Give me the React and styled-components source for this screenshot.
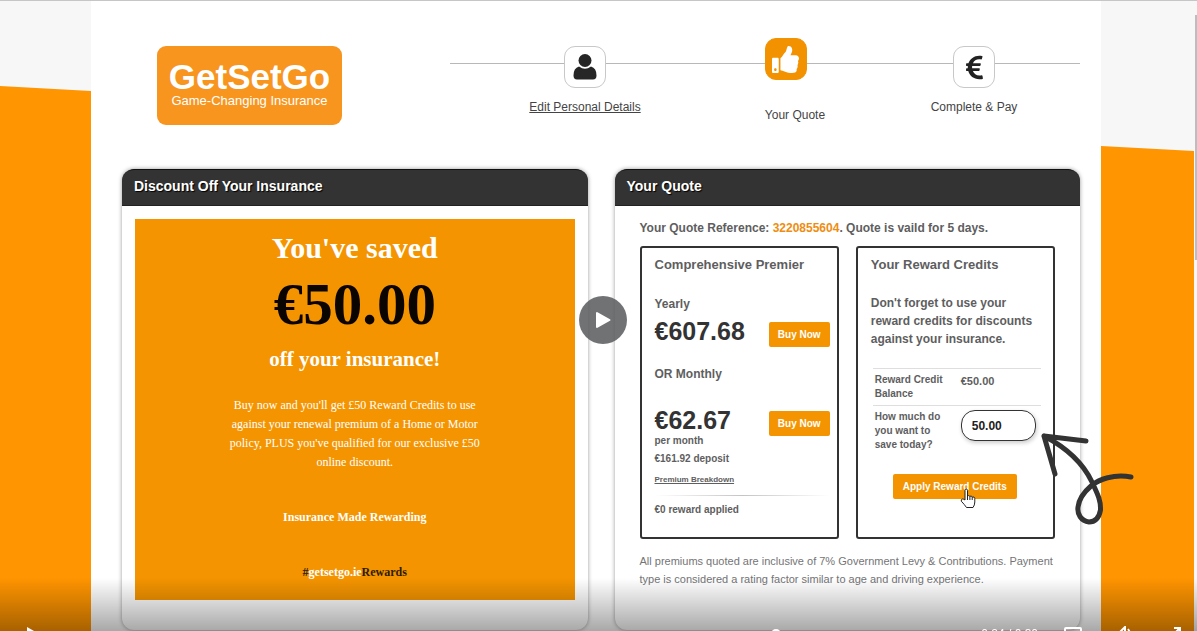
import React from "react";
import styled, { createGlobalStyle } from "styled-components";
import { FaThumbsUp, FaEuroSign } from "react-icons/fa";

function App() {
  return (
    <>
      <GlobalStyle />
      <Page>
        <Side $top="85px">
          <SideColor />
        </Side>
        <Main>
          <Header>
            <Logo href="#home">
              <LogoName>GetSetGo</LogoName>
              <LogoTag>Game-Changing Insurance</LogoTag>
            </Logo>
            <Steps>
              <Step>
                <StepBox>
                  <UserIcon />
                </StepBox>
                <StepLink href="#details">Edit Personal Details</StepLink>
              </Step>
              <Step $active>
                <StepBox $active>
                  <FaThumbsUp size={27} color="#fff" />
                </StepBox>
                <span>Your Quote</span>
              </Step>
              <Step>
                <StepBox>
                  <FaEuroSign size={27} color="#222" />
                </StepBox>
                <span>Complete &amp; Pay</span>
              </Step>
            </Steps>
          </Header>

          <Panels>
            <Panel>
              <PanelTitle>Discount Off Your Insurance</PanelTitle>
              <DiscountBody>
                <Promo>
                  <PromoLead>You've saved</PromoLead>
                  <PromoAmount>€50.00</PromoAmount>
                  <PromoSub>off your insurance!</PromoSub>
                  <PromoText>
                    Buy now and you'll get £50 Reward Credits to use against your
                    renewal premium of a Home or Motor policy, PLUS you've
                    qualified for our exclusive £50 online discount.
                  </PromoText>
                  <PromoLine>Insurance Made Rewarding</PromoLine>
                  <PromoLine $dark>
                    #<em>getsetgo.ie</em>Rewards
                  </PromoLine>
                </Promo>
              </DiscountBody>
            </Panel>

            <Panel>
              <PanelTitle>Your Quote</PanelTitle>
              <QuoteBody>
                <Reference>
                  Your Quote Reference: <b>3220855604</b>. Quote is vaild for 5 days.
                </Reference>
                <Cards>
                  <Card>
                    <CardTitle>Comprehensive Premier</CardTitle>
                    <Period $gap="21px">Yearly</Period>
                    <Plan $gap="4px">
                      <Price>€607.68</Price>
                      <BuyButton type="button">Buy Now</BuyButton>
                    </Plan>
                    <Period $gap="18px">OR Monthly</Period>
                    <Plan $gap="23px">
                      <div>
                        <Price>€62.67</Price>
                        <Small>per month</Small>
                      </div>
                      <BuyButton type="button">Buy Now</BuyButton>
                    </Plan>
                    <Small $gap="4px">€161.92 deposit</Small>
                    <Breakdown href="#breakdown">Premium Breakdown</Breakdown>
                    <Divider />
                    <Small $gap="7px">€0 reward applied</Small>
                  </Card>

                  <Card>
                    <CardTitle>Your Reward Credits</CardTitle>
                    <CardText>
                      Don't forget to use your reward credits for discounts
                      against your insurance.
                    </CardText>
                    <Credits>
                      <tbody>
                        <tr>
                          <th scope="row">Reward Credit Balance</th>
                          <td>€50.00</td>
                        </tr>
                        <tr>
                          <th scope="row">
                            <label htmlFor="amount">
                              How much do you want to save today?
                            </label>
                          </th>
                          <td>
                            <Amount id="amount" type="text" defaultValue="50.00" autoFocus />
                          </td>
                        </tr>
                      </tbody>
                    </Credits>
                    <ApplyButton type="button">
                      Apply Reward Credits
                      <HandCursor />
                    </ApplyButton>
                    <Arrow />
                  </Card>
                </Cards>
                <Footnote>
                  All premiums quoted are inclusive of 7% Government Levy &amp;
                  Contributions. Payment type is considered a rating factor
                  similar to age and driving experience.
                </Footnote>
              </QuoteBody>
            </Panel>
          </Panels>
        </Main>
        <Side $top="145px">
          <SideColor />
        </Side>
        <ScrollTrack>
          <ScrollThumb />
        </ScrollTrack>

        <Player>
          <PlayButton type="button" aria-label="Play video">
            <svg width="16" height="18" viewBox="0 0 16 18">
              <path d="M2 2v14l12.500-7z" fill="#fff" stroke="#fff" strokeWidth="2" strokeLinejoin="round" />
            </svg>
          </PlayButton>
          <Controls>
            <ControlButton type="button" aria-label="Play">
              <svg width="16" height="18" viewBox="0 0 16 18">
                <path d="M1 1v16l14-8z" fill="#fff" />
              </svg>
            </ControlButton>
            <Track>
              <Progress style={{ width: `${(24 / 30) * 100}%` }}>
                <Knob />
              </Progress>
            </Track>
            <Time>0:24 / 0:30</Time>
            <ControlButton type="button" aria-label="Captions">
              <svg width="18" height="16" viewBox="0 0 18 16">
                <rect x="1" y="2" width="16" height="13" rx="1" fill="none" stroke="#fff" strokeWidth="2" />
              </svg>
            </ControlButton>
            <ControlButton type="button" aria-label="Volume">
              <svg width="18" height="18" viewBox="0 0 18 18">
                <path d="M1 6h4l5-5v16l-5-5H1zM13 3q4 5 0 11" fill="none" stroke="#fff" strokeWidth="2" />
              </svg>
            </ControlButton>
            <ControlButton type="button" aria-label="Fullscreen">
              <svg width="16" height="16" viewBox="0 0 16 16">
                <path d="M8 2h6v6M14 2L2 14M2 8v6h6" fill="none" stroke="#fff" strokeWidth="2" />
              </svg>
            </ControlButton>
          </Controls>
        </Player>
      </Page>
    </>
  );
}

function UserIcon() {
  return (
    <svg width="26" height="28" viewBox="0 0 26 28" fill="#262626">
      <circle cx="13" cy="7.500" r="6.500" />
      <path d="M7 13.500Q13 18 19 13.500Q24.500 15 24.500 22.500Q24.500 26.500 21 26.500H5Q1.500 26.500 1.500 22.500Q1.500 15 7 13.500z" />
    </svg>
  );
}

function HandCursor() {
  return (
    <Hand width="16" height="21" viewBox="0 0 16 21">
      <path
        d="M5 12V2.500Q5 1 6.200 1T7.500 2.500V8Q8.700 6.900 9.900 8.400Q11.200 7.300 12.200 9Q14.500 8.300 14.800 10.500V14Q14.800 17 13 19.500H6.500Q4.500 16.500 1.300 13.200Q.8 11.200 2.600 11Q4 11 5 12z"
        fill="#fff"
        stroke="#222"
      />
      <path d="M7.500 8v4M9.900 8.500V12M12.200 9v3" stroke="#222" fill="none" />
    </Hand>
  );
}

function Arrow() {
  return (
    <ArrowSvg width="96" height="96" viewBox="0 0 96 96">
      <path
        d="M47 11L5 6L16 44M5 6C28 18 44 33 53 52C58 63 62 70 61.500 80C60 88 56 92 50 92C42 91 38 84 39 77C40 69 45 62 52 56C60 49 75 44 92 47"
        fill="none"
        stroke="#333"
        strokeWidth="5"
        strokeLinecap="round"
        strokeLinejoin="round"
      />
    </ArrowSvg>
  );
}

const GlobalStyle = createGlobalStyle`
  * {
    box-sizing: border-box;
  }
  body {
    margin: 0;
    font-family: "Liberation Sans", Arial, sans-serif;
    font-size: 12px;
    color: #5e5e60;
    background: #fff;
  }
  h2, h3, p {
    margin: 0;
  }
  button, input {
    font-family: inherit;
  }
`;

const Page = styled.div`
  position: relative;
  display: grid;
  grid-template-columns: 91px minmax(0, 1fr) 93px 3px;
  height: 100vh;
  overflow: hidden;
  border-top: 1px solid #c6c6c9;
`;

const Side = styled.div`
  display: flex;
  padding-top: ${(props) => props.$top};
  background: #f7f7f7;
`;

const SideColor = styled.div`
  flex: 1;
  background: #ff9500;
  clip-path: polygon(0 0, 100% 5px, 100% 100%, 0 100%);
`;

const Main = styled.main`
  position: relative;
  z-index: 1;
  padding: 0 21px 0 31px;
`;

const Header = styled.header`
  display: flex;
  justify-content: space-between;
  align-items: flex-start;
  height: 168px;
  padding-left: 35px;
`;

const Logo = styled.a`
  display: flex;
  flex-direction: column;
  align-items: center;
  width: 185px;
  height: 79px;
  margin-top: 45px;
  padding-top: 14px;
  border-radius: 9px;
  background: #f7951f;
  color: #fff;
  text-decoration: none;
`;

const LogoName = styled.span`
  font-size: 35px;
  line-height: 34px;
  font-weight: bold;
`;

const LogoTag = styled.span`
  font-size: 13px;
  line-height: 14px;
`;

const Steps = styled.nav`
  display: grid;
  grid-template-columns: 210fr 210fr 148fr;
  align-items: start;
  width: 630px;
  padding: 0 32px 0 30px;
  background: linear-gradient(#b8b8b8, #b8b8b8) 0 62px / 100% 1px no-repeat;
`;

const Step = styled.div`
  display: flex;
  flex-direction: column;
  align-items: ${(props) => (props.$active ? "flex-start" : "center")};
  justify-self: center;
  gap: ${(props) => (props.$active ? "27px" : "11px")};
  padding-top: ${(props) => (props.$active ? "37px" : "45px")};
  line-height: 16px;
  color: #444;
`;

const StepBox = styled.div`
  display: flex;
  align-items: center;
  justify-content: center;
  width: 42px;
  height: 42px;
  border: 1px solid ${(props) => (props.$active ? "#f39200" : "#c8c8c8")};
  border-radius: 11px;
  background: ${(props) => (props.$active ? "#f39200" : "#fff")};
`;

const StepLink = styled.a`
  color: #444;
`;

const Panels = styled.div`
  display: grid;
  grid-template-columns: repeat(2, minmax(0, 1fr));
  gap: 27px;
`;

const Panel = styled.section`
  border-radius: 12px;
  background: #fff;
  box-shadow: 0 0 4px rgba(0, 0, 0, 0.4);
`;

const PanelTitle = styled.h2`
  height: 37px;
  padding-left: 12px;
  border-top: 1px solid #111;
  border-bottom: 1px solid #222;
  border-radius: 12px 12px 0 0;
  background: #333;
  color: #fff;
  font-size: 14px;
  line-height: 33px;
  text-shadow: 1px 1px 1px #000;
`;

const DiscountBody = styled.div`
  padding: 13px 13px 30px;
`;

const Promo = styled.div`
  display: flex;
  flex-direction: column;
  align-items: center;
  padding: 11px 0 18px;
  background: #f49400;
  color: #fff;
  font-family: "Liberation Serif", "Times New Roman", serif;
  text-align: center;
`;

const PromoLead = styled.h3`
  font-size: 30px;
  line-height: 36px;
`;

const PromoAmount = styled.p`
  margin-top: 5px;
  color: #0a0500;
  font-size: 59px;
  line-height: 66px;
  font-weight: bold;
`;

const PromoSub = styled.p`
  margin-top: 10px;
  font-size: 21px;
  line-height: 24px;
  font-weight: bold;
`;

const PromoText = styled.p`
  max-width: 256px;
  margin-top: 25px;
  line-height: 19px;
`;

const PromoLine = styled.p`
  margin-top: 36px;
  line-height: 19px;
  font-weight: bold;
  color: ${(props) => (props.$dark ? "#2e1c00" : "#fff")};

  em {
    color: #fff;
    font-style: normal;
  }
`;

const QuoteBody = styled.div`
  padding: 13px 25px 30px;
`;

const Reference = styled.p`
  line-height: 18px;
  font-weight: bold;

  b {
    color: #ee8d10;
  }
`;

const Cards = styled.div`
  display: grid;
  grid-template-columns: repeat(2, minmax(0, 1fr));
  gap: 17px;
  margin-top: 9px;
`;

const Card = styled.div`
  position: relative;
  padding: 8px 7px 20px 13px;
  border: 2px solid #333;
  border-radius: 3px;
`;

const CardTitle = styled.h3`
  font-size: 13px;
  line-height: 18px;
`;

const Period = styled.p`
  margin-top: ${(props) => props.$gap};
  line-height: 18px;
  font-weight: bold;
`;

const Plan = styled.div`
  display: flex;
  justify-content: space-between;
  align-items: flex-start;
  margin-top: ${(props) => props.$gap};
`;

const Price = styled.p`
  color: #333;
  font-size: 25px;
  line-height: 28px;
  font-weight: bold;
`;

const Small = styled.p`
  margin-top: ${(props) => props.$gap || "0"};
  font-size: 10px;
  line-height: 14px;
  font-weight: bold;
`;

const Button = styled.button`
  height: 25px;
  padding: 0 9px;
  border: 0;
  border-radius: 2px;
  background: #f49400;
  color: #fff;
  font-size: 10px;
  font-weight: bold;
`;

const BuyButton = styled(Button)`
  width: 61px;
  margin-top: 5px;
`;

const ApplyButton = styled(Button)`
  position: relative;
  display: block;
  width: 124px;
  margin: 18px 0 0 22px;
  white-space: nowrap;
`;

const Hand = styled.svg`
  position: absolute;
  top: 14px;
  left: 67px;
`;

const Breakdown = styled.a`
  display: block;
  margin-top: 7px;
  color: inherit;
  font-size: 8px;
  line-height: 14px;
  font-weight: bold;
`;

const Divider = styled.hr`
  height: 1px;
  margin: 8px 0 0;
  border: 0;
  background: linear-gradient(90deg, transparent, #c4c4c4 50%, transparent);
`;

const CardText = styled.p`
  margin-top: 20px;
  line-height: 18px;
  font-weight: bold;
`;

const Credits = styled.table`
  width: calc(100% - 7px);
  margin: 20px 5px 0 2px;
  border-collapse: collapse;
  table-layout: fixed;
  font-weight: bold;

  tr {
    border-top: 1px solid #dedede;
  }
  th {
    width: 88px;
    padding: 4px 12px 4px 2px;
    font-size: 10px;
    line-height: 14px;
    text-align: left;
  }
  td {
    padding: 4px 0;
    font-size: 11px;
    line-height: 16px;
    vertical-align: top;
  }
`;

const Amount = styled.input`
  display: block;
  width: 75px;
  height: 31px;
  padding: 0 10px;
  border: 1px solid #333;
  border-radius: 14px;
  outline: none;
  background: #fff;
  box-shadow: 1px 2px 4px rgba(0, 0, 0, 0.2);
  color: #222;
  font-size: 12px;
  font-weight: bold;
`;

const ArrowSvg = styled.svg`
  position: absolute;
  top: 182px;
  right: -82px;
`;

const Footnote = styled.p`
  margin-top: 13px;
  color: #747476;
  font-size: 11px;
  line-height: 18px;
`;

const ScrollTrack = styled.div`
  padding: 14px 0 0 1px;
  background: #f7f7f7;
`;

const ScrollThumb = styled.div`
  height: 245px;
  background: #bdbdbd;
`;

/* video overlay, runs a little past the visible frame */
const Player = styled.div`
  position: absolute;
  z-index: 2;
  inset: -2px -9px -9px 0;
  display: flex;
  align-items: center;
  justify-content: center;
`;

const PlayButton = styled.button`
  display: flex;
  align-items: center;
  justify-content: center;
  width: 48px;
  height: 48px;
  padding: 0;
  border: 0;
  border-radius: 50%;
  background: rgba(92, 94, 96, 0.88);
`;

const Controls = styled.div`
  position: absolute;
  left: 0;
  right: 0;
  bottom: 0;
  display: flex;
  align-items: flex-start;
  height: 62px;
  padding: 48px 24px 0 26px;
  background: linear-gradient(transparent, rgba(0, 0, 0, 0.4));
`;

const ControlButton = styled.button`
  display: flex;
  margin-right: 33px;
  padding: 0;
  border: 0;
  background: none;

  &:last-child {
    margin-right: 0;
  }
`;

const Track = styled.div`
  flex: 1;
  height: 3px;
  margin: 6px 24px 0 0;
  background: rgba(255, 255, 255, 0.5);
`;

const Progress = styled.div`
  display: flex;
  align-items: center;
  justify-content: flex-end;
  height: 3px;
  background: #fff;
`;

const Knob = styled.div`
  width: 10px;
  height: 10px;
  border-radius: 50%;
  background: #fff;
`;

const Time = styled.span`
  margin-right: 26px;
  color: #fff;
  line-height: 16px;
`;

export default App;
